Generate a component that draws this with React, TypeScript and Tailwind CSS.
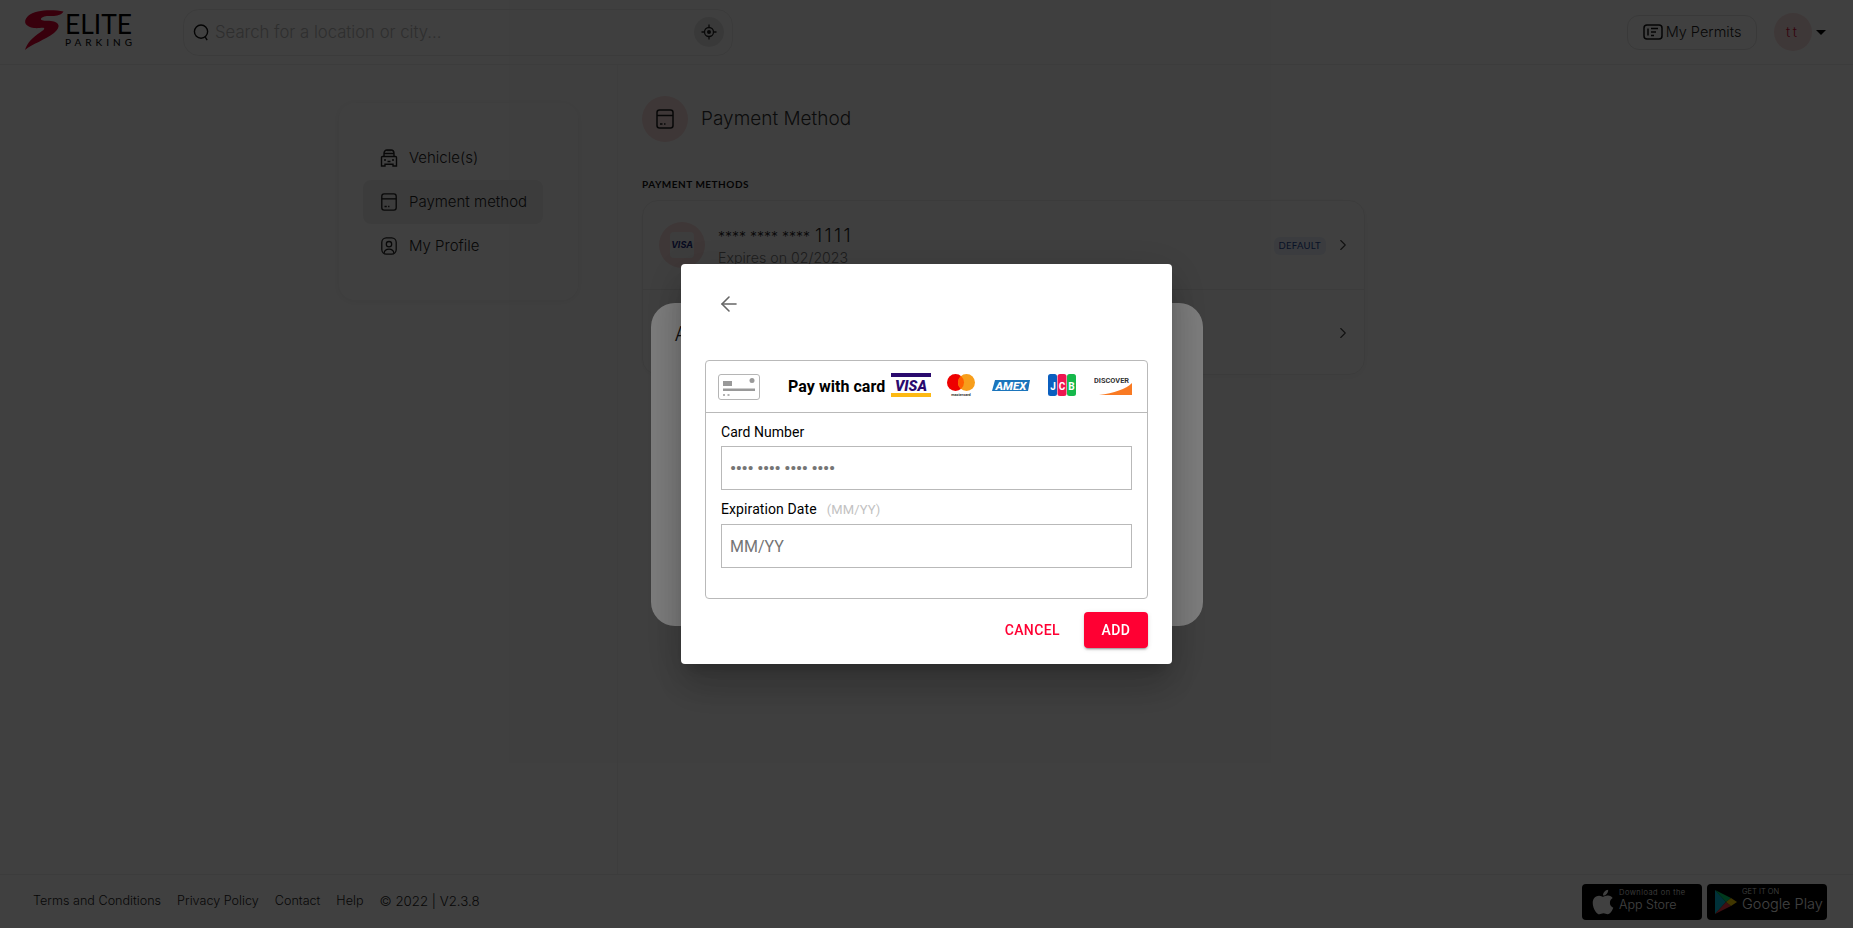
import { ChevronRight, ArrowLeft } from "lucide-react";
import { FaApple } from "react-icons/fa";

function CardIcon({ className }: { className?: string }) {
  return (
    <svg viewBox="0 0 18 20" fill="none" stroke="currentColor" strokeWidth="1.5" className={className}>
      <rect x="1" y="1" width="16" height="18" rx="2.5" />
      <path d="M1 6.5h16" />
      <path d="M4 15h2.5M8 15h1.5" />
    </svg>
  );
}

function CarIcon({ className }: { className?: string }) {
  return (
    <svg viewBox="0 0 18 18" fill="none" stroke="currentColor" strokeWidth="1.4" className={className}>
      <path d="M4 7V4.2C4 2.4 5.2 1 7 1h4c1.8 0 3 1.4 3 3.2V7" />
      <path d="M4 4.5h10M8 1v1.2M10 1v1.2" />
      <path d="M2.5 7.5h13c.6 0 1 .4 1 1V17h-3.5v-1.8H5V17H1.5V8.500c0-.6.4-1 1-1z" />
      <path d="M4 11h2M12 11h2M7.500 12.500h3" />
    </svg>
  );
}

function ProfileIcon({ className }: { className?: string }) {
  return (
    <svg viewBox="0 0 18 20" fill="none" stroke="currentColor" strokeWidth="1.4" className={className}>
      <rect x="1" y="1" width="16" height="18" rx="5" />
      <circle cx="9" cy="8" r="3" />
      <path d="M3.500 18c.4-3 2.500-4.500 5.500-4.500s5.100 1.500 5.500 4.500" />
    </svg>
  );
}

function Logo() {
  return (
    <svg viewBox="0 0 112 42" className="w-28 h-[42px] shrink-0 overflow-visible">
      <path
        d="M39.500 0.500C30-1.500 12-2 4 5C-2 11 2 16 10 17C14 17.500 18 16.500 20 17C21 18 19 19.500 16 21.500C9 26 3 32 1 39C8 33 21 29 30 22C37 16 36 11 27 10C22 9.500 18 10 17 8.500C16.500 6 22 4.500 26 5C31 5.500 37 4.500 39.500 0.500Z"
        fill="#e00030"
      />
      <text x="41" y="23" fontSize="26" fontWeight="400" textLength="67" lengthAdjust="spacingAndGlyphs" fontFamily="Lato, sans-serif" fill="#000">
        ELITE
      </text>
      <text x="41" y="35" fontSize="10" fontWeight="500" textLength="67" fontFamily="Lato, sans-serif" fill="#111">
        PARKING
      </text>
    </svg>
  );
}

function Brands() {
  return (
    <div className="flex items-center ml-[6px] -mt-[3px]">
      <svg viewBox="0 0 40 24" className="w-10 h-6 shrink-0">
        <rect width="40" height="4" fill="#2a0a6e" />
        <rect y="20" width="40" height="4" fill="#fdb913" />
        <text x="20" y="17.500" fontSize="14.500" fontWeight="900" fontStyle="italic" textAnchor="middle" fontFamily="Roboto, sans-serif" fill="#2a0a6e">
          VISA
        </text>
      </svg>
      <svg viewBox="0 0 28 23" className="w-7 h-[23px] ml-4 shrink-0">
        <circle cx="8.500" cy="8.500" r="8.500" fill="#ee0000" />
        <circle cx="19.500" cy="8.500" r="8.500" fill="#f79e1b" />
        <path d="M14 2a8.500 8.500 0 0 1 0 13a8.500 8.500 0 0 1 0-13z" fill="#ff5f00" />
        <text x="14" y="22" fontSize="3.800" textAnchor="middle" fontFamily="Roboto, sans-serif" fontWeight="700" fill="#333">
          mastercard
        </text>
      </svg>
      <svg viewBox="0 0 38 11" className="w-[38px] h-[11px] ml-[17px] shrink-0">
        <path d="M3 0h35l-2 11H0z" fill="#1b75bc" />
        <text x="19" y="9.500" fontSize="11" fontWeight="800" fontStyle="italic" textAnchor="middle" textLength="31" lengthAdjust="spacingAndGlyphs" fontFamily="Roboto, sans-serif" fill="#fff">
          AMEX
        </text>
      </svg>
      <svg viewBox="0 0 28 22" className="w-7 h-[22px] ml-[18px] shrink-0">
        <rect width="9" height="22" rx="2.500" fill="#0b5fbf" />
        <rect x="9.500" width="9" height="22" rx="2.500" fill="#ee1650" />
        <rect x="19" width="9" height="22" rx="2.500" fill="#15b84b" />
        <text x="5" y="16" fontSize="10" fontWeight="700" textAnchor="middle" fontFamily="Roboto, sans-serif" fill="#fff">J</text>
        <text x="14" y="16" fontSize="10" fontWeight="700" textAnchor="middle" fontFamily="Roboto, sans-serif" fill="#fff">C</text>
        <text x="23.500" y="16" fontSize="10" fontWeight="700" textAnchor="middle" fontFamily="Roboto, sans-serif" fill="#fff">B</text>
      </svg>
      <svg viewBox="0 0 38 19" className="w-[38px] h-[19px] ml-[18px] shrink-0">
        <path d="M38 7v12H5C20 17 32 13 38 7z" fill="#f97a23" />
        <text x="0" y="7" fontSize="7" fontWeight="700" textLength="35" lengthAdjust="spacingAndGlyphs" fontFamily="Roboto, sans-serif" fill="#333">
          DISCOVER
        </text>
      </svg>
    </div>
  );
}

export default function App() {
  return (
    <div className="relative h-[928px] overflow-hidden bg-white flex flex-col font-[Inter,sans-serif] font-light text-[#1c1c1c]">
      {/* header */}
      <header className="h-[65px] shrink-0 border-b border-[#f0f0f0] flex items-center pl-6 pr-[27px]">
        <Logo />
        <div className="ml-[47px] w-[550px] h-[47px] rounded-2xl border border-[#ececec] flex items-center pl-[9px] pr-[8px]">
          <svg viewBox="0 0 18 20" fill="none" stroke="#111" strokeWidth="1.500" className="w-[17px] h-[19px] shrink-0">
            <circle cx="8.500" cy="9" r="7" />
            <path d="M13 15l2 3" />
          </svg>
          <span className="ml-[5px] pt-[2px] text-[16.700px] text-[#b8b8b8]">Search for a location or city...</span>
          <span className="ml-auto w-[30px] h-[30px] rounded-full bg-[#e6e6e6] flex items-center justify-center">
            <svg viewBox="0 0 16 16" fill="none" stroke="#222" strokeWidth="1.300" className="w-4 h-4">
              <circle cx="8" cy="8" r="4.500" />
              <circle cx="8" cy="8" r="2" fill="#222" stroke="none" />
              <path d="M8 0.500v3M8 12.500v3M0.500 8h3M12.500 8h3" />
            </svg>
          </span>
        </div>
        <div className="ml-auto flex items-center">
          <button className="w-[130px] h-[35px] rounded-xl border border-[#e4e4e4] flex items-center justify-center gap-[3px] text-[14.500px] text-[#222]">
            <svg viewBox="0 0 20 16" fill="none" stroke="#111" strokeWidth="1.500" className="w-5 h-4">
              <rect x="1" y="1" width="18" height="14" rx="3" />
              <path d="M5 4.500v7M8 4.500h7M8 8h5M8 11.500h3" />
            </svg>
            My Permits
          </button>
          <span className="ml-[17px] w-[38px] h-[38px] rounded-full bg-[#f8dede] flex items-center justify-center text-[#d0103a] text-sm tracking-[3px]">
            tt
          </span>
          <span className="ml-1 w-0 h-0 border-x-[5px] border-x-transparent border-t-[5px] border-t-black" />
        </div>
      </header>

      <main className="flex-1 flex min-h-0">
        {/* left menu */}
        <aside className="w-[618px] shrink-0 border-r border-[#f4f4f4] pl-[339px] pt-[38px]">
          <nav className="w-[239px] h-[197px] rounded-2xl shadow-[0_1px_8px_rgba(0,0,0,0.08)] pl-6 pr-[35px] pt-[33px] text-[15px]">
            <a className="h-11 flex items-center gap-[11px] pl-[17px] rounded-lg text-[#222]">
              <CarIcon className="w-[18px] h-[18px]" />
              Vehicle(s)
            </a>
            <a className="h-11 flex items-center gap-[11px] pl-[17px] rounded-lg bg-[#f0f0f0] text-[#222]">
              <CardIcon className="w-[18px] h-[18px]" />
              Payment method
            </a>
            <a className="h-11 flex items-center gap-[11px] pl-[17px] rounded-lg text-[#222]">
              <ProfileIcon className="w-[18px] h-[18px]" />
              My Profile
            </a>
          </nav>
        </aside>

        {/* payment methods */}
        <section className="flex-1 pl-[24px] pt-[31px] pr-[488px]">
          <div className="flex items-center gap-[13px]">
            <span className="w-[46px] h-[46px] rounded-full bg-[#f8dede] flex items-center justify-center">
              <CardIcon className="w-[18px] h-5" />
            </span>
            <h1 className="text-[19px] text-[#333]">Payment Method</h1>
          </div>
          <h2 className="mt-[34px] font-[Lato,sans-serif] text-[10px] font-bold tracking-[0.5px] text-[#111] leading-4">PAYMENT METHODS</h2>
          <div className="mt-2 h-[175px] rounded-2xl border border-[#eeeeee] shadow-[0_2px_10px_rgba(0,0,0,0.04)]">
            <div className="h-[89px] border-b border-[#eeeeee] flex items-center pl-4 pr-[12px]">
              <span className="w-[46px] h-[46px] rounded-full bg-[#f8dede] flex items-center justify-center">
                <span className="w-6 h-[26px] rounded bg-[#f5f5f5] flex items-center justify-center text-[9px] italic font-bold text-[#1a2a80]">VISA</span>
              </span>
              <div className="ml-[13px] flex-1 pt-[1px]">
                <p className="text-lg leading-[23px] text-[#222]">
                  <span className="text-[14px]">**** **** ****</span> <span className="tracking-[2.400px]">1111</span>
                </p>
                <p className="text-[14.200px] leading-5 text-[#777]">Expires on 02/2023</p>
              </div>
              <span className="mt-[2px] px-[5px] h-[18px] rounded-md bg-[#e9f0fb] font-[Lato,sans-serif] font-normal text-[9.500px] leading-[18px] tracking-[0.3px] text-[#274a9a]">DEFAULT</span>
              <ChevronRight className="ml-[8px] w-[18px] h-[18px] text-[#444]" strokeWidth={1.5} />
            </div>
            <div className="h-[85px] flex items-center justify-end pr-[12px]">
              <ChevronRight className="w-[18px] h-[18px] text-[#444]" strokeWidth={1.5} />
            </div>
          </div>
        </section>
      </main>

      {/* footer */}
      <footer className="h-[54px] shrink-0 border-t border-[#f0f0f0] flex items-center pl-[33px] pr-[26px] text-[12.600px] text-[#222]">
        <a>Terms and Conditions</a>
        <a className="ml-4">Privacy Policy</a>
        <a className="ml-4">Contact</a>
        <a className="ml-4">Help</a>
        <span className="ml-[16px] text-[13.300px]">© 2022 | V2.3.8</span>
        <div className="ml-auto flex gap-[5px]">
          <div className="w-[120px] h-9 rounded-[4px] bg-black flex items-center pl-2 text-white">
            <FaApple className="w-[26px] h-[28px]" />
            <div className="ml-[3px] leading-none -mt-[2px]">
              <p className="text-[7.500px] tracking-[0.5px]">Download on the</p>
              <p className="text-[12.500px] leading-[15px]">App Store</p>
            </div>
          </div>
          <div className="w-[120px] h-9 rounded-[4px] bg-black flex items-center pl-2 text-white">
            <svg viewBox="0 0 24 26" className="w-6 h-7 -ml-[1px]">
              <path d="M1 1l11 12L1 25z" fill="#00c3e3" />
              <path d="M1 1l16 8-5 4z" fill="#00e676" />
              <path d="M1 25l16-8-5-4z" fill="#ff3d47" />
              <path d="M17 9l6 4-6 4-5-4z" fill="#ffd600" />
            </svg>
            <div className="ml-[4px] leading-none -mt-[3px]">
              <p className="text-[7.500px]">GET IT ON</p>
              <p className="text-[14.500px] leading-[17px]">Google Play</p>
            </div>
          </div>
        </div>
      </footer>

      {/* first dialog, behind */}
      <div className="fixed inset-0 bg-black/50 flex items-center justify-center">
        <div className="w-[552px] h-[323px] rounded-3xl bg-white pl-6 pt-[17px] text-xl text-[#222]">Add</div>
      </div>

      {/* add card dialog */}
      <div className="fixed inset-0 bg-black/50 flex items-center justify-center font-[Roboto,sans-serif] font-normal">
        <div className="w-[491px] h-[400px] rounded bg-white px-6 flex flex-col shadow-[0_11px_15px_-7px_rgba(0,0,0,0.2),0_24px_38px_3px_rgba(0,0,0,0.14),0_9px_46px_8px_rgba(0,0,0,0.12)]">
          <div className="h-24 shrink-0 pt-[28px]">
            <ArrowLeft className="ml-[12px] w-6 h-6 text-[#666]" strokeWidth={1.6} />
          </div>
          <div className="h-[239px] shrink-0 rounded border border-[#b9b9b9]">
            <div className="h-[52px] border-b border-[#b9b9b9] flex items-center pl-3">
              <svg viewBox="0 0 42 26" fill="none" className="w-[42px] h-[26px] shrink-0">
                <rect x="0.500" y="0.500" width="41" height="25" rx="2.500" stroke="#b5b5b5" />
                <rect x="5" y="7" width="9" height="5" fill="#999" />
                <circle cx="34" cy="6.500" r="2.500" fill="#999" />
                <rect x="5" y="14.500" width="32" height="2.500" fill="#999" />
                <path d="M5 21h2M9.500 21h2" stroke="#999" strokeWidth="1.500" />
              </svg>
              <span className="ml-[28px] text-base font-bold tracking-[0.05px] text-black whitespace-nowrap">Pay with card</span>
              <Brands />
            </div>
            <div className="px-[15px]">
              <label className="block text-sm tracking-[0.05px] leading-5 mt-[9px] text-black">Card Number</label>
              <input
                placeholder="•••• •••• •••• ••••"
                className="mt-[4px] block w-full h-[44px] border border-[#b9b9b9] px-2 text-[17px] font-bold tracking-[-0.3px] outline-none placeholder:text-[#757575]"
              />
              <label className="block text-sm tracking-[0.1px] leading-5 mt-[9px] text-black">
                Expiration Date
                <span className="ml-[10px] text-[13px] text-[#c2c2c2]">(MM/YY)</span>
              </label>
              <input
                placeholder="MM/YY"
                className="mt-[4px] block w-full h-[44px] border border-[#b9b9b9] px-2 text-base outline-none placeholder:text-[#757575]"
              />
            </div>
          </div>
          <div className="mt-[13px] flex items-center justify-end">
            <button className="text-sm font-medium tracking-[0.4px] text-[#ff0033]">CANCEL</button>
            <button className="ml-6 w-16 h-9 rounded bg-[#ff0033] text-sm font-medium tracking-[0.4px] text-white shadow-[0_3px_1px_-2px_rgba(0,0,0,0.2),0_2px_2px_0_rgba(0,0,0,0.14),0_1px_5px_0_rgba(0,0,0,0.12)]">
              ADD
            </button>
          </div>
        </div>
      </div>
    </div>
  );
}
